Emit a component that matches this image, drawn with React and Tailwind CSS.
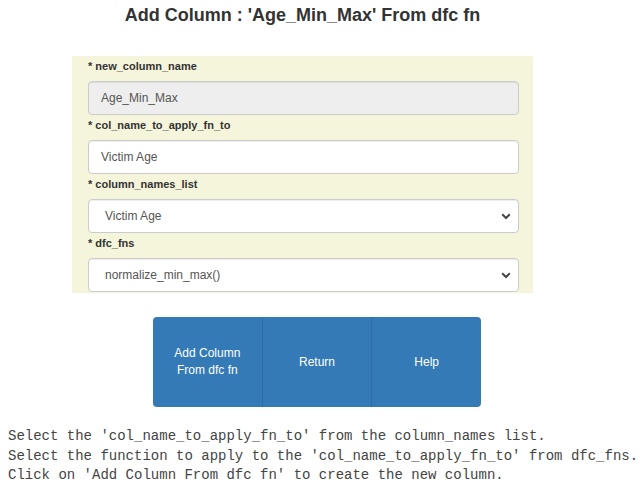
import React from "react";

const fields = [
  { label: "new_column_name", value: "Age_Min_Max", kind: "disabled" },
  { label: "col_name_to_apply_fn_to", value: "Victim Age", kind: "input" },
  { label: "column_names_list", value: "Victim Age", kind: "select" },
  { label: "dfc_fns", value: "normalize_min_max()", kind: "select" },
];

function Chevron() {
  return (
    <svg width="10" height="7" viewBox="0 0 10 7" className="shrink-0">
      <path d="M1.2 1.3 L5 5 L8.8 1.3" fill="none" stroke="#444" strokeWidth="2" />
    </svg>
  );
}

function Field({ label, value, kind }) {
  const box =
    "h-[34px] w-full flex items-center rounded-[4px] border border-[#ccc] shadow-[inset_0_1px_1px_rgba(0,0,0,0.075)] text-[12px] text-[#555]";
  return (
    <div>
      <div className="pt-[2px] pb-[7px] text-[11px] leading-[16px] font-bold text-[#333]">
        * {label}
      </div>
      {kind === "select" ? (
        <div className={`${box} bg-white pl-[16px] pr-[7px] justify-between`}>
          <span>{value}</span>
          <Chevron />
        </div>
      ) : (
        <div className={`${box} ${kind === "disabled" ? "bg-[#eee]" : "bg-white"} px-[12px]`}>
          {value}
        </div>
      )}
    </div>
  );
}

export default function App() {
  return (
    <div className="w-[640px] min-h-[485px] bg-white text-[#333]" style={{ fontFamily: '"Liberation Sans", Arial, sans-serif' }}>
      <h1 className="ml-[72px] w-[461px] pt-[5px] text-center text-[18px] leading-[20px] font-bold text-[#333]">
        Add Column : 'Age_Min_Max' From dfc fn
      </h1>

      <div className="ml-[72px] mt-[31px] w-[461px] bg-[#f5f5dc] pl-[16px] pr-[14px] pb-[1px]">
        {fields.map((f) => (
          <Field key={f.label} {...f} />
        ))}
      </div>

      <div className="ml-[153px] mt-[24px] w-[328px] h-[90px] flex rounded-[4px] overflow-hidden bg-[#337ab7] text-white text-[12px] leading-[17px]">
        <div className="flex-1 flex items-center justify-center text-center">
          Add Column
          <br />
          From dfc fn
        </div>
        <div className="flex-1 flex items-center justify-center border-l border-[#2e6da4]">Return</div>
        <div className="flex-1 flex items-center justify-center border-l border-[#2e6da4]">Help</div>
      </div>

      <div
        className="ml-[8px] mt-[20px] text-[14px] leading-[19.5px] text-[#444] whitespace-pre"
        style={{ fontFamily: '"Liberation Mono", "Courier New", monospace' }}
      >
        <div>Select the 'col_name_to_apply_fn_to' from the column_names list.</div>
        <div>Select the function to apply to the 'col_name_to_apply_fn_to' from dfc_fns.</div>
        <div>Click on 'Add Column From dfc fn' to create the new column.</div>
      </div>
    </div>
  );
}
